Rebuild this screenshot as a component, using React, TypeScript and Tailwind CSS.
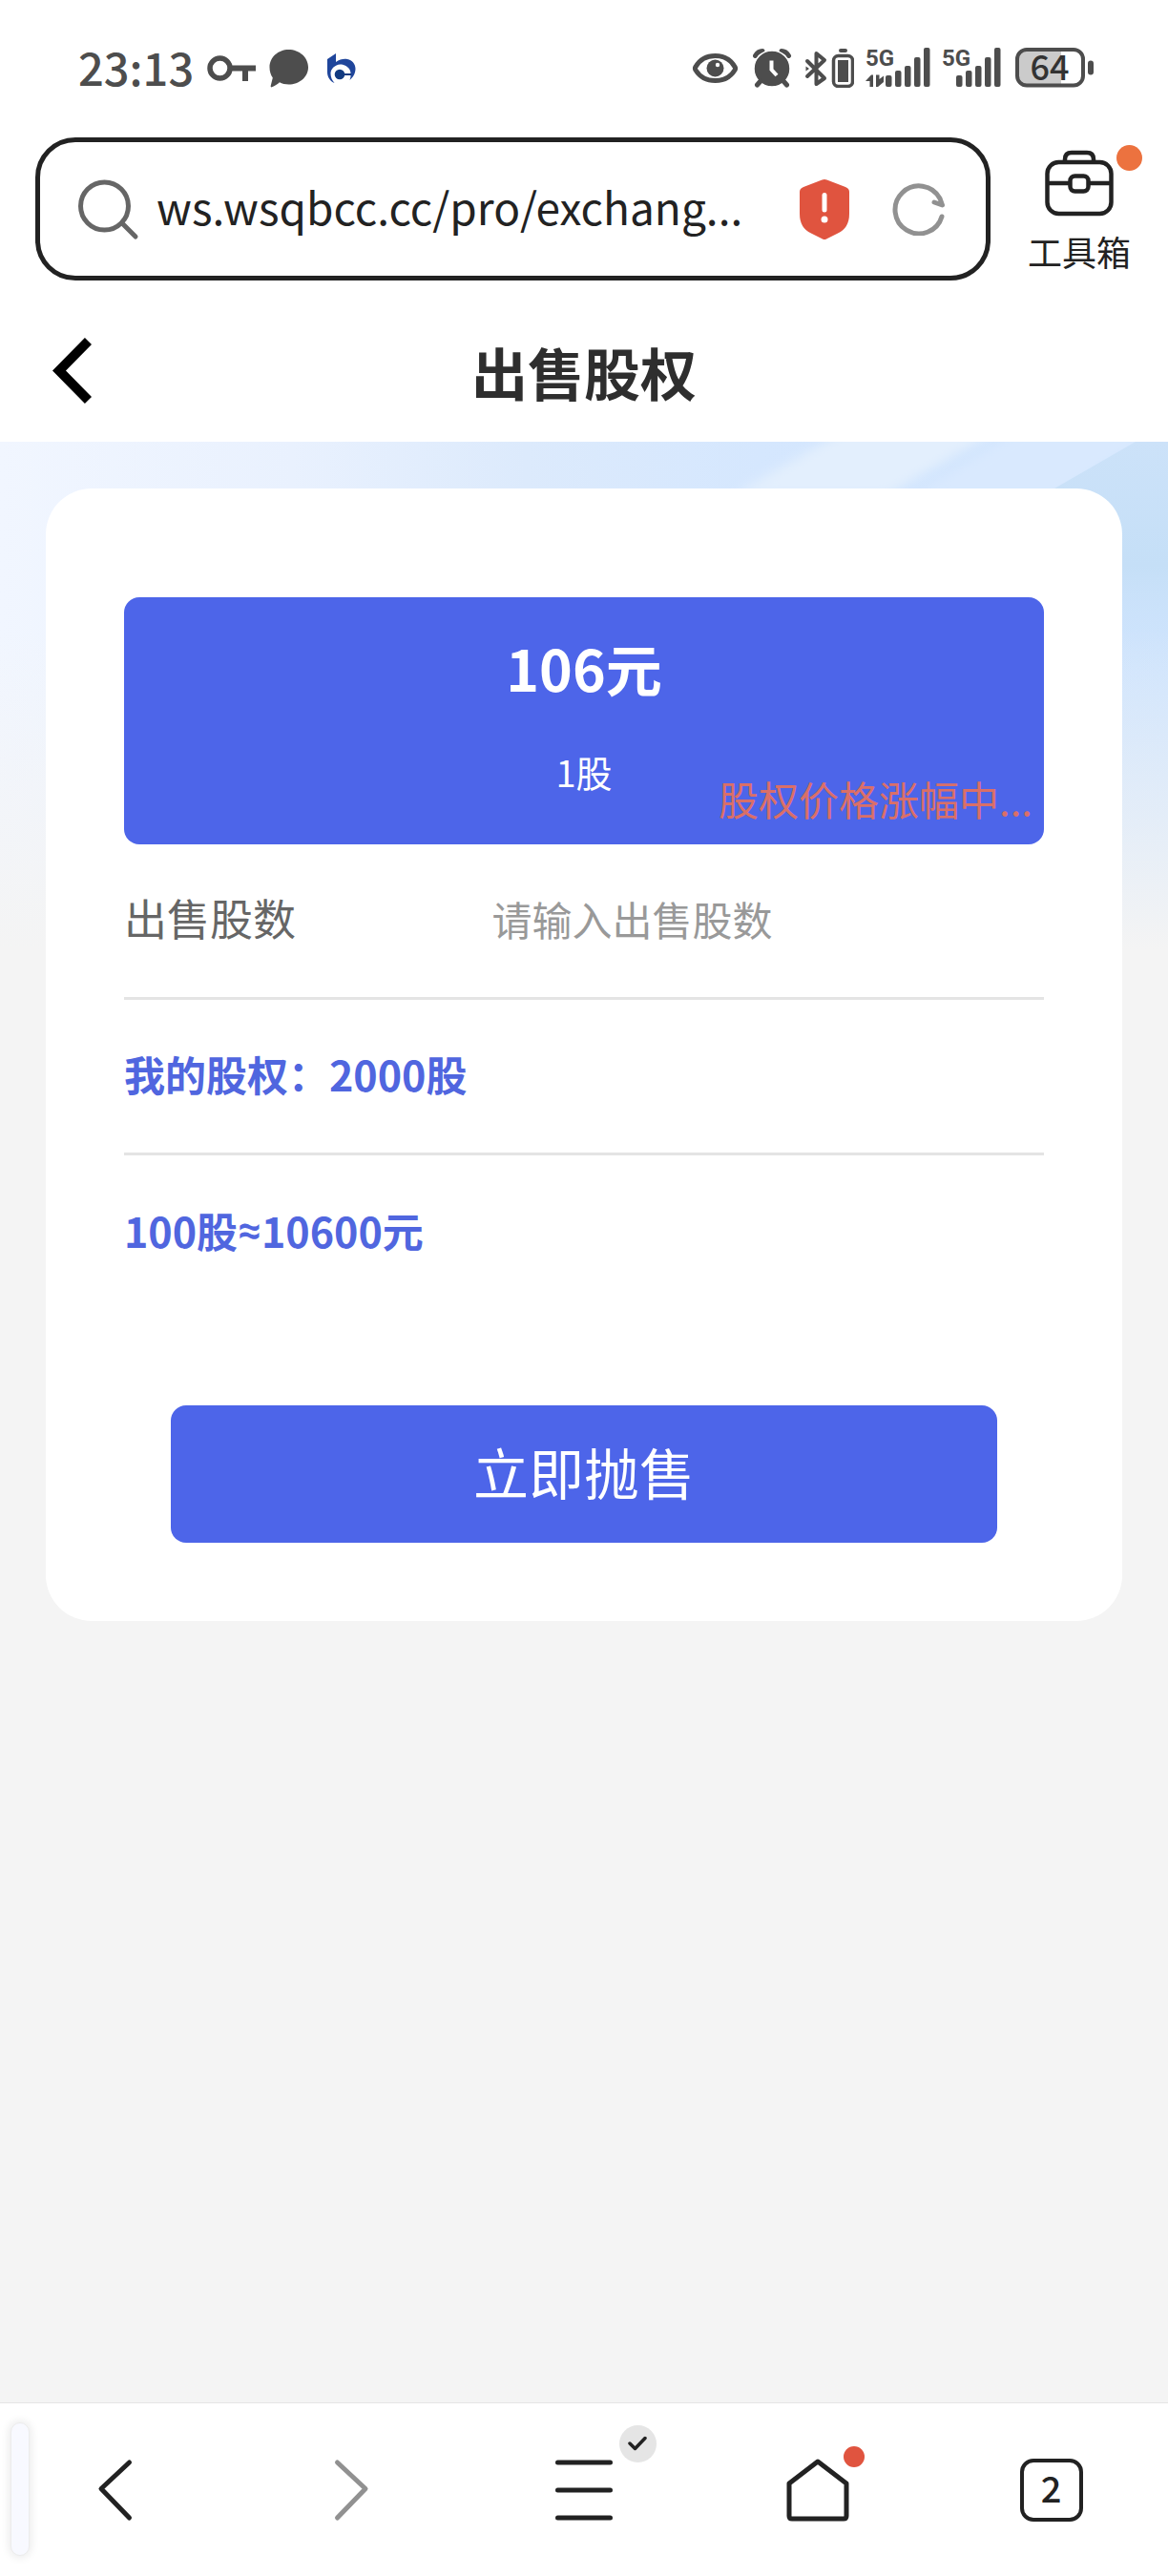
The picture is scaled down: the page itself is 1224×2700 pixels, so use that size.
import { useState } from 'react'

function StatusBar() {
  return (
    <div className="flex h-[142px] items-center justify-between bg-white pl-[82px] pr-[78px] text-[#4d4d4d]">
      <div className="flex items-center gap-[14px]">
        <span className="pb-1 text-[47px] leading-none font-medium">23:13</span>
        <KeyIcon />
        <BubbleIcon />
        <BankLogo />
      </div>
      <div className="flex items-center gap-3">
        <EyeIcon />
        <AlarmIcon />
        <BluetoothIcon />
        <SignalIcon data />
        <SignalIcon />
        <BatteryIcon level={64} />
      </div>
    </div>
  )
}

function KeyIcon() {
  return (
    <svg width="51" height="42" viewBox="0 0 51 42" fill="none" stroke="currentColor" aria-hidden="true">
      <circle cx="13.5" cy="21.5" r="10.5" strokeWidth="5.5" />
      <path d="M25 21.5H51M40 21.5V35" strokeWidth="6" />
    </svg>
  )
}

function BubbleIcon() {
  return (
    <svg width="42" height="42" viewBox="0 0 42 42" fill="currentColor" aria-hidden="true">
      <path d="M20.500 2C31.500 2 41 10 41 20.500S31.500 38.500 20.500 38.500C17 38.500 13.500 37.700 11 36.300C8.800 38.200 6 40 3 41.300C1.900 41.600 1.600 41 1.700 40L3.800 31.500C1.800 28.500.500 25 .500 20.500C.500 10 9.500 2 20.500 2Z" />
    </svg>
  )
}

function BankLogo() {
  return (
    <svg width="36" height="42" viewBox="0 0 36 42" fill="#1f459b" aria-hidden="true">
      <path d="M5 12L14 6V15C18 12 22 11.500 26 12C31 13 34.500 17 34.500 22C34.500 27 32 31 28.500 34C30 30 30 26 28.500 23C26 19 22 17.500 18.500 17.500C13 18 8.500 22 8.500 27C8.500 31 10 34 12.500 37C8 35 5 31 5 25.500Z" />
      <circle cx="18" cy="28" r="5.300" fill="#123a80" />
      <path d="M22 28H30" stroke="#123a80" strokeWidth="2" />
    </svg>
  )
}

function EyeIcon() {
  return (
    <svg width="52" height="42" viewBox="0 0 52 42" fill="none" aria-hidden="true">
      <path
        d="M4 20C8 13 15.500 8.500 24.500 8.500S41 13 45 20C46 21.500 46 22 45 23.500C41 30 33.500 34.500 24.500 34.500S8 30 4 23.500C3 22 3 21.500 4 20Z"
        stroke="currentColor"
        strokeWidth="5"
      />
      <circle cx="24.500" cy="21.500" r="9" fill="currentColor" />
      <circle cx="27" cy="18" r="2.200" fill="white" />
    </svg>
  )
}

function AlarmIcon() {
  return (
    <svg width="41" height="42" viewBox="0 0 41 42" fill="none" stroke="currentColor" strokeLinecap="round" aria-hidden="true">
      <path d="M2.500 8.500C4.500 5 7 3.500 10 3.500M37.500 8.500C35.500 5 33 3.500 30 3.500" strokeWidth="5" />
      <circle cx="20" cy="22" r="19" fill="currentColor" stroke="white" strokeWidth="1.500" />
      <path d="M8 35L4.500 39M32 35L35.500 39" strokeWidth="5" />
      <path d="M19.500 13.500V23L25 29" stroke="white" strokeWidth="4" strokeLinecap="butt" />
    </svg>
  )
}

function BluetoothIcon() {
  return (
    <svg width="53" height="42" viewBox="0 0 53 42" fill="none" stroke="currentColor" aria-hidden="true">
      <path d="M4 14L22 32L13.500 38V6L22 13L4 30" strokeWidth="4" strokeLinejoin="round" strokeLinecap="round" />
      <path d="M2.500 19.500L6 22L2.500 24.500Z" fill="currentColor" stroke="none" />
      <rect x="31.500" y="8.500" width="20" height="32" rx="5" strokeWidth="3.500" />
      <rect x="36" y="13" width="11" height="23" fill="currentColor" stroke="none" />
      <rect x="37" y="1" width="9" height="4" rx="2" fill="currentColor" stroke="none" />
    </svg>
  )
}

function SignalIcon({ data = false }: { data?: boolean }) {
  const offset = data ? 0 : -6
  const bars = [
    { x: 20, h: 12 },
    { x: 30, h: 17 },
    { x: 40, h: 22 },
    { x: 50, h: 31 },
    { x: 60, h: 41 },
  ]
  return (
    <svg width={data ? 68 : 65} height="62" viewBox={data ? '0 -10 68 62' : '0 -10 65 62'} fill="currentColor" aria-hidden="true">
      <text x="0" y="19" fontSize="24" fontWeight="700" className="font-[Roboto,sans-serif]">
        5G
      </text>
      {bars.map(bar => (
        <rect key={bar.x} x={bar.x + offset + 1} y={41 - bar.h} width="6.500" height={bar.h} rx="2" />
      ))}
      {data && <path d="M0 35L6 28.500H8V41H4.500V35ZM11 28.500H14.500V33L19 29.500V36L13 41H11Z" />}
    </svg>
  )
}

function BatteryIcon({ level }: { level: number }) {
  return (
    <svg width="82" height="62" viewBox="0 -10 82 62" aria-hidden="true">
      <path d="M13 2H48V39H13C6 39 2 35 2 28V13C2 6 6 2 13 2Z" fill="#cbcbcb" />
      <rect x="2" y="2" width="69" height="37.500" rx="10" fill="none" stroke="currentColor" strokeWidth="4" />
      <rect x="76" y="13.500" width="6" height="15" rx="3" fill="currentColor" />
      <text x="36" y="34" fontSize="36" fontWeight="500" textAnchor="middle" fill="#333333">
        {level}
      </text>
    </svg>
  )
}

function AddressBar() {
  return (
    <div className="flex h-[154px] items-center bg-white pl-[37px] text-[#222222]">
      <div className="flex h-[150px] min-w-0 flex-1 items-center rounded-[42px] border-[5px] border-[#222222] pl-10 pr-[42px]">
        <svg width="64" height="66" viewBox="0 0 64 66" fill="none" stroke="#666666" strokeWidth="5" strokeLinecap="round" aria-hidden="true">
          <circle cx="27.500" cy="30" r="25" />
          <path d="M46 48L60 62" />
        </svg>
        <input
          type="text"
          aria-label="网址"
          defaultValue="ws.wsqbcc.cc/pro/exchang..."
          className="ml-[18px] min-w-0 flex-1 bg-transparent pb-1.5 text-[46px] leading-[72px] outline-none"
        />
        <svg className="shrink-0" width="54" height="66" viewBox="0 0 54 66" aria-hidden="true">
          <path
            d="M24.500 2.500Q27 1.500 29.500 2.500L49 10Q53 11.500 53 15V38Q53 53 41 58.500L29 64.500Q27 65.500 25 64.500L13 58.500Q1 53 1 38V15Q1 11.500 5 10Z"
            fill="#e0543f"
          />
          <path d="M27 18.500V34" stroke="white" strokeWidth="5" strokeLinecap="round" />
          <circle cx="27" cy="44" r="3.500" fill="white" />
        </svg>
        <button type="button" aria-label="刷新" className="ml-11 shrink-0">
          <svg width="56" height="56" viewBox="0 0 56 56" fill="none" stroke="#919191" strokeWidth="5" strokeLinecap="round" strokeLinejoin="round">
            <path d="M52 36A25 25 0 1 1 50 17L52.500 24L44 21" />
          </svg>
        </button>
      </div>
      <button type="button" className="flex w-[186px] shrink-0 flex-col items-center pt-2">
        <span className="relative">
          <svg width="72" height="70" viewBox="0 0 72 70" fill="none" stroke="#222222" strokeWidth="4.500">
            <rect x="2.500" y="13" width="67" height="54" rx="12" />
            <path d="M21 13V10Q21 3 28 3H44Q51 3 51 10V13M2.500 35H26M46 35H69.500" />
            <rect x="26.500" y="27.500" width="19" height="16" rx="5" />
          </svg>
          <span className="absolute -right-[30px] -top-[5px] size-[27px] rounded-full bg-[#ec723f]" />
        </span>
        <span className="mt-2.5 text-[36px] leading-[52px]">工具箱</span>
      </button>
    </div>
  )
}

function PageHeader() {
  return (
    <header className="relative flex h-[167px] items-center justify-center bg-white pt-5">
      <button type="button" aria-label="返回" className="absolute left-[54px]">
        <svg width="42" height="72" viewBox="0 0 42 72" fill="none" stroke="black" strokeWidth="10">
          <path d="M38.500 3.500L8 34.500L38.500 65.500" />
        </svg>
      </button>
      <h1 className="text-[59px] leading-[80px] font-bold text-[#2e2e2e]">出售股权</h1>
    </header>
  )
}

// Pale blue sky with light beams, fading into the grey page
function Backdrop() {
  return (
    <svg className="absolute inset-x-0 top-0 h-[560px] w-full" viewBox="0 0 1224 560" preserveAspectRatio="none" aria-hidden="true">
      <defs>
        <linearGradient id="sky">
          <stop offset="0" stopColor="#f1f6ff" />
          <stop offset="0.25" stopColor="#e9f1fe" />
          <stop offset="0.45" stopColor="#dceafc" />
          <stop offset="0.65" stopColor="#d5e7fe" />
          <stop offset="1" stopColor="#cfe4fd" />
        </linearGradient>
        <linearGradient id="fade" x1="0" y1="0" x2="0" y2="1">
          <stop offset="0.35" stopColor="#f4f4f4" stopOpacity="0" />
          <stop offset="0.7" stopColor="#f4f4f4" stopOpacity="0.55" />
          <stop offset="0.95" stopColor="#f4f4f4" />
        </linearGradient>
        <linearGradient id="corner" x1="0" y1="0" x2="0" y2="1">
          <stop offset="0" stopColor="#cce2f9" />
          <stop offset="0.5" stopColor="#c5dff7" />
          <stop offset="1" stopColor="#cfe4fd" stopOpacity="0" />
        </linearGradient>
        <filter id="soft">
          <feGaussianBlur stdDeviation="6" />
        </filter>
      </defs>
      <rect width="1224" height="560" fill="url(#sky)" />
      <g filter="url(#soft)">
        <path d="M900 -20H1060L930 55H770Z" fill="#e3effd" />
        <path d="M1080 -20H1230L1110 55H960Z" fill="#d9e9fe" />
      </g>
      <path d="M1190 0H1224V260H1105V49Z" fill="url(#corner)" />
      <rect width="1224" height="560" fill="url(#fade)" />
    </svg>
  )
}

function SellForm() {
  const [amount, setAmount] = useState('')

  return (
    <form
      onSubmit={e => e.preventDefault()}
      className="relative mx-12 mt-[49px] rounded-[48px] bg-white px-[82px] pt-[114px] pb-[82px]"
    >
      <div className="relative rounded-2xl bg-[#4d65e9] pt-[29px] pb-[47px] text-center text-white">
        <p className="text-[59px] leading-[90px] font-bold">106元</p>
        <p className="mt-[35px] text-[38px] leading-[58px]">1股</p>
        <p className="absolute right-3 bottom-[18px] text-[42px] leading-[60px] text-[#da6f68]">股权价格涨幅中...</p>
      </div>

      <div className="flex h-[163px] items-center border-b-[3px] border-[#e4e4e4] pb-1.5">
        <label htmlFor="amount" className="w-2/5 text-[45px] text-[#666666]">
          出售股数
        </label>
        <input
          id="amount"
          type="text"
          inputMode="numeric"
          value={amount}
          onChange={e => setAmount(e.target.value)}
          placeholder="请输入出售股数"
          className="min-w-0 flex-1 bg-transparent text-[42px] text-[#333333] outline-none placeholder:text-[#999999]"
        />
      </div>
      <p className="flex h-[163px] items-center border-b-[3px] border-[#e4e4e4] pb-1.5 text-[43px] font-bold text-[#5066df]">
        我的股权：2000股
      </p>
      <p className="flex h-40 items-center pb-1 text-[43px] font-bold text-[#5066df]">
        100股<span className="font-[Roboto,sans-serif]">≈</span>10600元
      </p>

      <div className="mt-[102px] px-[49px]">
        <button type="submit" className="h-36 w-full rounded-2xl bg-[#4d65e9] pb-1.5 text-[58px] text-white">
          立即抛售
        </button>
      </div>
    </form>
  )
}

function BottomNav() {
  return (
    <nav className="relative flex h-[182px] items-center border-t border-[#e5e5e5] bg-white text-[#222222]">
      <span className="absolute top-5 left-[11px] h-[140px] w-5 rounded-full border border-[#ececec] bg-[#f8f9ff] shadow-[0_0_8px_2px_rgba(0,0,0,0.08)]" />
      <button type="button" aria-label="后退" className="flex flex-1 justify-center">
        <svg width="40" height="66" viewBox="0 0 40 66" fill="none" stroke="currentColor" strokeWidth="5" strokeLinecap="round" strokeLinejoin="round">
          <path d="M33.500 4L4 31.500L33.500 62" />
        </svg>
      </button>
      <button type="button" aria-label="前进" className="flex flex-1 justify-center">
        <svg width="40" height="66" viewBox="0 0 40 66" fill="none" stroke="#919191" strokeWidth="5" strokeLinecap="round" strokeLinejoin="round">
          <path d="M6.500 4L36 31.500L6.500 62" />
        </svg>
      </button>
      <button type="button" aria-label="菜单" className="flex flex-1 justify-center">
        <span className="relative">
          <svg width="62" height="66" viewBox="0 0 62 66" fill="none" stroke="currentColor" strokeWidth="5" strokeLinecap="round">
            <path d="M3.500 4H58.500M3.500 33H58.500M3.500 62H58.500" />
          </svg>
          <span className="absolute -top-[35px] -right-[45px] flex size-[39px] items-center justify-center rounded-full bg-[#e5e5e5]">
            <svg width="20" height="16" viewBox="0 0 20 16" fill="none" stroke="currentColor" strokeWidth="3.500" strokeLinecap="round" strokeLinejoin="round">
              <path d="M2 8L7.500 13.500L18 2.500" />
            </svg>
          </span>
        </span>
      </button>
      <button type="button" aria-label="主页" className="flex flex-1 justify-center">
        <span className="relative">
          <svg width="66" height="66" viewBox="0 0 66 66" fill="none" stroke="currentColor" strokeWidth="5" strokeLinejoin="round">
            <path d="M33 3L63 26V60Q63 63 60 63H6Q3 63 3 60V26Z" />
          </svg>
          <span className="absolute -top-[13px] -right-4 size-[22px] rounded-full bg-[#e0543f]" />
        </span>
      </button>
      <button type="button" aria-label="窗口" className="flex flex-1 justify-center">
        <span className="flex size-[66px] items-center justify-center rounded-[14px] border-[4px] border-current pb-1.5 text-[38px] leading-none font-medium">
          2
        </span>
      </button>
    </nav>
  )
}

export default function App() {
  return (
    <div className="flex min-h-screen flex-col bg-[#f4f4f4] font-['Noto_Sans_CJK_SC',sans-serif]">
      <StatusBar />
      <AddressBar />
      <PageHeader />
      <main className="relative flex flex-1 flex-col">
        <Backdrop />
        <SellForm />
      </main>
      <BottomNav />
    </div>
  )
}
